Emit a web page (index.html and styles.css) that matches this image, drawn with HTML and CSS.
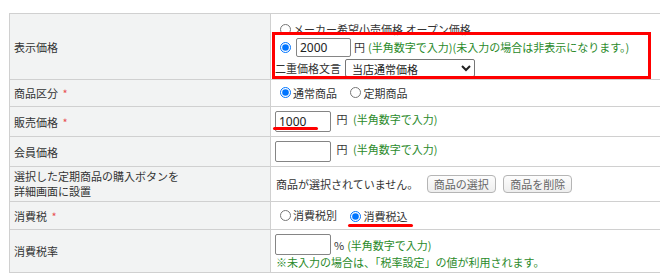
FILE: index.html
```html
<!DOCTYPE html>
<html lang="ja">
<head>
    <meta charset="UTF-8">
    <title>商品登録 - 価格設定</title>
    <link rel="stylesheet" href="styles.css">
</head>
<body>
    <div class="page">
        <table class="form-table">
            <colgroup>
                <col class="col-label">
                <col>
            </colgroup>
            <tr class="row-display">
                <th>表示価格</th>
                <td class="cell-display">
                    <div class="line line-first">
                        <label class="choice"><input type="radio" name="display">メーカー希望小売価格 オープン価格</label>
                    </div>
                    <div class="line line-amount">
                        <input type="radio" name="display" checked>
                        <input type="text" class="num num-small" value="2000">
                        <span class="unit">円</span>
                        <span class="note">(半角数字で入力)(未入力の場合は非表示になります。)</span>
                    </div>
                    <div class="line line-wording">
                        <span class="sub-label">二重価格文言</span>
                        <select class="wording">
                            <option>当店通常価格</option>
                            <option>メーカー希望小売価格</option>
                        </select>
                    </div>
                    <span class="mark-box"></span>
                </td>
            </tr>
            <tr class="row-type">
                <th>商品区分 <span class="req">*</span></th>
                <td>
                    <label class="choice"><input type="radio" name="type" checked>通常商品</label>
                    <label class="choice"><input type="radio" name="type">定期商品</label>
                </td>
            </tr>
            <tr class="row-sale">
                <th>販売価格 <span class="req">*</span></th>
                <td>
                    <span class="marked">
                        <input type="text" class="num" value="1000">
                        <span class="mark-line mark-price"></span>
                    </span>
                    <span class="unit">円</span>
                    <span class="note">(半角数字で入力)</span>
                </td>
            </tr>
            <tr class="row-member">
                <th>会員価格</th>
                <td>
                    <input type="text" class="num" value="">
                    <span class="unit">円</span>
                    <span class="note">(半角数字で入力)</span>
                </td>
            </tr>
            <tr class="row-regular">
                <th class="two-lines">選択した定期商品の購入ボタンを<br>詳細画面に設置</th>
                <td>
                    <span class="status">商品が選択されていません。</span>
                    <button type="button" class="small-button">商品の選択</button>
                    <button type="button" class="small-button">商品を削除</button>
                </td>
            </tr>
            <tr class="row-tax">
                <th>消費税 <span class="req">*</span></th>
                <td>
                    <label class="choice"><input type="radio" name="tax">消費税別</label>
                    <label class="choice marked"><input type="radio" name="tax" checked>消費税込<span class="mark-line mark-tax"></span></label>
                </td>
            </tr>
            <tr class="row-rate">
                <th>消費税率</th>
                <td class="cell-rate">
                    <div class="line-rate">
                        <input type="text" class="num" value="">
                        <span class="unit">%</span>
                        <span class="note">(半角数字で入力)</span>
                    </div>
                    <div class="note">※未入力の場合は、「税率設定」の値が利用されます。</div>
                </td>
            </tr>
        </table>
    </div>
</body>
</html>
```

FILE: styles.css
```css
:root {
    --border-color: #d0d0d0;
    --label-bg: #f2f3f3;
    --text-color: #333;
    --note-color: #2a8a2a;
    --mark-color: #f00;
    --req-color: #e8504f;
}

* {
    margin: 0;
    padding: 0;
    box-sizing: border-box;
}

body {
    font-family: "Noto Sans CJK JP", "Noto Sans", sans-serif;
    font-size: 11px;
    color: var(--text-color);
    background: #fff;
    overflow: hidden;
}

.page {
    padding: 13px 0 0 9px;
}

.form-table {
    width: 700px;
    border-collapse: collapse;
    table-layout: fixed;
}

.col-label {
    width: 261px;
}

.form-table th,
.form-table td {
    border: 1px solid var(--border-color);
    vertical-align: middle;
    text-align: left;
}

.form-table th {
    background: var(--label-bg);
    font-weight: normal;
    padding: 0 4px;
}

.form-table td {
    padding: 0 4px;
}

.row-display { height: 66px; }
.row-type { height: 27px; }
.row-sale { height: 30px; }
.row-member { height: 30px; }
.row-regular { height: 35px; }
.row-tax { height: 28px; }
.row-rate { height: 43px; }

.two-lines {
    line-height: 15px;
}

.req {
    color: var(--req-color);
    margin-left: 2px;
}

/* 表示価格 */
.cell-display {
    position: relative;
    vertical-align: top;
}

.line {
    display: flex;
    align-items: center;
    white-space: nowrap;
}

.line-first {
    height: 17px;
    margin-top: 5px;
}

.line-amount {
    height: 19px;
    padding-left: 5px;
}

.line-wording {
    height: 19px;
    margin-top: 2px;
}

.sub-label {
    margin-right: 4px;
}

.mark-box {
    position: absolute;
    left: 1px;
    top: 18px;
    width: 379px;
    height: 47px;
    border: 3px solid var(--mark-color);
}

/* radios */
input[type="radio"] {
    width: 11px;
    height: 11px;
    margin: 0 2px 0 0;
    vertical-align: -1px;
}

.choice {
    display: inline-flex;
    align-items: center;
    margin-left: 5px;
    margin-right: 6px;
}

.line-amount input[type="radio"] {
    margin-right: 5px;
}

/* inputs */
.num {
    width: 56px;
    height: 21px;
    border: 1px solid #858585;
    border-radius: 2px;
    padding: 0 3px;
    font-family: "Noto Sans", sans-serif;
    font-size: 12px;
    color: #222;
    vertical-align: middle;
}

.num-small {
    width: 55px;
    height: 19px;
}

.unit {
    margin-left: 3px;
}

.note {
    color: var(--note-color);
    margin-left: 3px;
}

div.note {
    margin-left: 1px;
    line-height: 14px;
}

.wording {
    width: 130px;
    height: 18px;
    border: 1px solid #767676;
    border-radius: 2px;
    font-family: "Noto Sans CJK JP", sans-serif;
    font-size: 11px;
    color: #222;
    background: #fff;
    padding-left: 2px;
}

/* annotations */
.marked {
    position: relative;
    display: inline-block;
}

.mark-line {
    position: absolute;
    height: 3px;
    border-radius: 2px;
    background: var(--mark-color);
}

.mark-price {
    left: -2px;
    bottom: 2px;
    width: 45px;
}

.mark-tax {
    left: -2px;
    bottom: -3px;
    width: 65px;
}

/* buttons */
.status {
    margin-left: 1px;
    margin-right: 6px;
}

.small-button {
    height: 18px;
    padding: 0 6px;
    margin-right: 5px;
    border: 1px solid #b5b5b5;
    border-radius: 4px;
    background: linear-gradient(#fdfdfd, #eee);
    color: #666;
    font-family: "Noto Sans CJK JP", sans-serif;
    font-size: 11px;
}

.cell-rate {
    vertical-align: top;
    padding-top: 3px;
}

.line-rate {
    display: flex;
    align-items: flex-end;
}

.line-rate .unit {
    margin-left: 3px;
    line-height: 14px;
    margin-bottom: 3px;
}

.line-rate .note {
    line-height: 14px;
    margin-bottom: 3px;
}
```
